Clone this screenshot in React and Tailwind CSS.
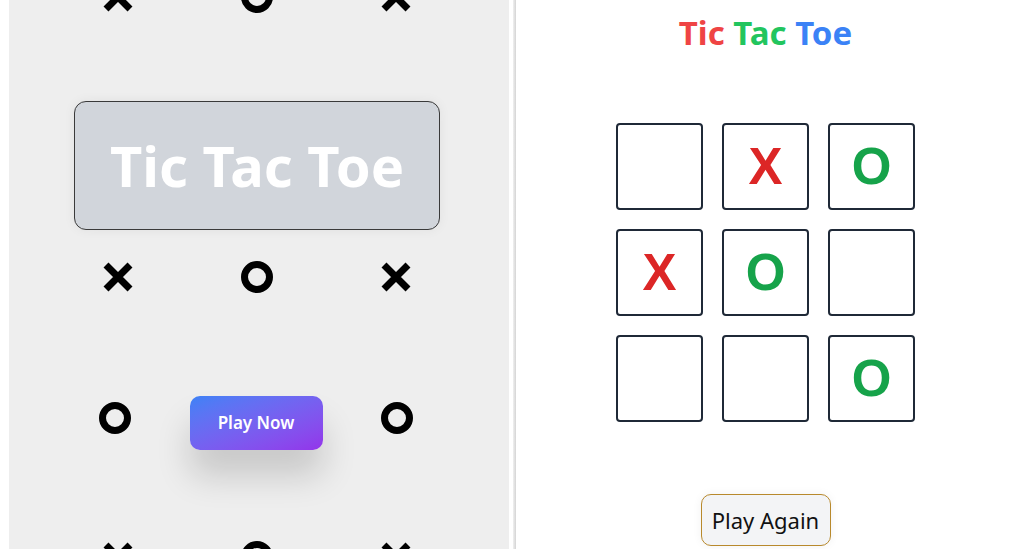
import React from 'react';

const font = { fontFamily: '"Noto Sans", "Open Sans", sans-serif' };

function XMark() {
  return (
    <svg width="32" height="32" viewBox="0 0 32 32">
      <path d="M4 4 L28 28 M28 4 L4 28" stroke="#000" strokeWidth="7" strokeLinecap="butt" />
    </svg>
  );
}

function OMark() {
  return (
    <svg width="32" height="32" viewBox="0 0 32 32">
      <circle cx="16" cy="16" r="12.5" fill="none" stroke="#000" strokeWidth="7" />
    </svg>
  );
}

function IconRow({ items, className }) {
  return (
    <div className={`w-[310px] flex items-center justify-between shrink-0 ${className}`}>
      {items.map((k, i) => (
        <div key={i} className="w-8 h-8 flex items-center justify-center">
          {k === 'x' ? <XMark /> : <OMark />}
        </div>
      ))}
    </div>
  );
}

const board = ['', 'X', 'O', 'X', 'O', '', '', '', 'O'];

export default function App() {
  return (
    <div className="w-[1018px] h-[549px] bg-white flex overflow-hidden" style={font}>
      {/* landing side */}
      <div className="ml-[9px] w-[500px] h-[549px] bg-[#eeeeee] overflow-hidden shrink-0">
        <div className="w-[496px] flex flex-col items-center">
          <IconRow items={['x', 'o', 'x']} className="-mt-[19px]" />
          <div className="mt-[88px] w-[366px] h-[129px] bg-[#d1d5db] border border-[#3a3a3a] rounded-[12px] shadow-[0_0_12px_rgba(0,0,0,0.06)] flex items-center justify-center shrink-0">
            <h1 className="text-white font-bold text-[56px] leading-none -mt-[2px]">Tic Tac Toe</h1>
          </div>
          <IconRow items={['x', 'o', 'x']} className="mt-[31px]" />
          <div className="mt-[103px] w-[314px] -ml-[2px] flex items-start justify-between shrink-0">
            <div className="mt-[6px] w-8 h-8 flex items-center justify-center"><OMark /></div>
            <button className="w-[133px] h-[54px] rounded-[10px] bg-gradient-to-br from-[#3b82f6] to-[#9333ea] text-white font-semibold text-[17px] shadow-[0_26px_34px_rgba(0,0,0,0.16)]">
              Play Now
            </button>
            <div className="mt-[6px] w-8 h-8 flex items-center justify-center"><OMark /></div>
          </div>
          <IconRow items={['x', 'o', 'x']} className="mt-[91px]" />
        </div>
      </div>

      {/* divider */}
      <div className="ml-[4px] w-[3px] h-full bg-gradient-to-r from-[#f0f0f0] to-[#d4d4d4] shrink-0" />

      {/* game side */}
      <div className="w-[499px] h-full flex flex-col items-center shrink-0">
        <h2 className="mt-[11px] text-[33px] font-bold leading-[44px]">
          <span className="text-[#ef4444]">Tic</span>{' '}
          <span className="text-[#22c55e]">Tac</span>{' '}
          <span className="text-[#3b82f6]">Toe</span>
        </h2>
        <div className="mt-[68px] grid grid-cols-[repeat(3,87px)] gap-[19px]">
          {board.map((v, i) => (
            <div
              key={i}
              className="w-[87px] h-[87px] border-2 border-[#1f2937] rounded-[4px] flex items-center justify-center"
            >
              <span
                className={`text-[51px] font-bold leading-none ${v === 'X' ? 'text-[#dc2626]' : 'text-[#16a34a]'}`}
                style={{ fontFamily: '"Liberation Sans", Arial, sans-serif' }}
              >
                {v}
              </span>
            </div>
          ))}
        </div>
        <button className="mt-[72px] w-[130px] h-[52px] rounded-[10px] bg-[#f3f4f6] border border-[#b8892c] text-[#111] text-[22px] shadow-[0_0_10px_rgba(0,0,0,0.06)]">
          Play Again
        </button>
      </div>
    </div>
  );
}
